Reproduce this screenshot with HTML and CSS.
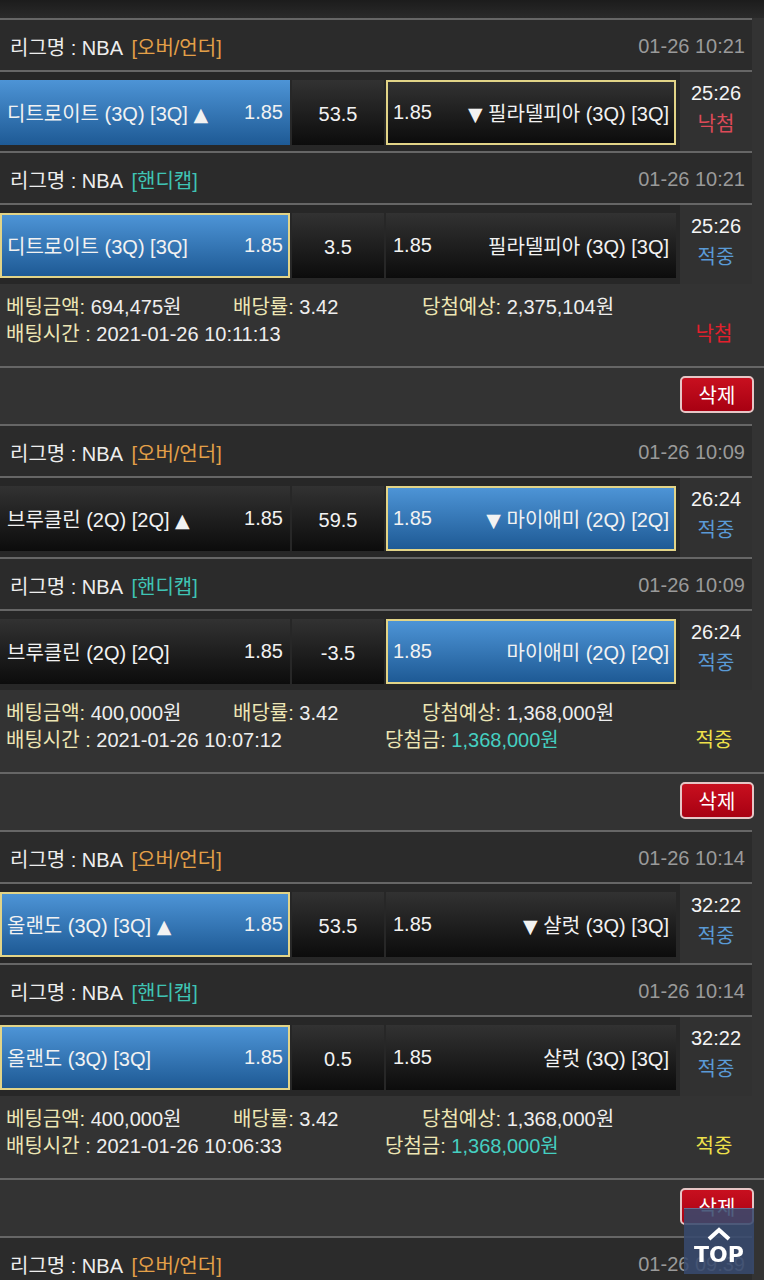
FILE: index.html
```html
<!DOCTYPE html>
<html lang="ko">
<head>
    <meta charset="UTF-8">
    <meta name="viewport" content="width=device-width, initial-scale=1.0">
    <title>배팅내역</title>
    <link rel="stylesheet" href="styles.css">
</head>
<body>
    <div class="top-bar"></div>

    <!-- slip 1 -->
    <div class="slip">
        <div class="league"><span>리그명 : NBA <em class="ou">[오버/언더]</em></span><span class="date">01-26 10:21</span></div>
        <div class="bet-row">
            <div class="cell pick"><span>디트로이트 (3Q) [3Q] <span class="arw">▲</span></span><span>1.85</span></div>
            <div class="cell draw">53.5</div>
            <div class="cell mine"><span>1.85</span><span><span class="arw">▼</span> 필라델피아 (3Q) [3Q]</span></div>
            <div class="result"><span>25:26</span><span class="lose">낙첨</span></div>
        </div>
        <div class="league"><span>리그명 : NBA <em class="hc">[핸디캡]</em></span><span class="date">01-26 10:21</span></div>
        <div class="bet-row">
            <div class="cell pick mine"><span>디트로이트 (3Q) [3Q]</span><span>1.85</span></div>
            <div class="cell draw">3.5</div>
            <div class="cell"><span>1.85</span><span>필라델피아 (3Q) [3Q]</span></div>
            <div class="result"><span>25:26</span><span class="win">적중</span></div>
        </div>
        <div class="details">
            <div class="line">
                <span class="c1"><b>베팅금액:</b> 694,475원</span>
                <span class="c2"><b>배당률:</b> 3.42</span>
                <span><b>당첨예상:</b> 2,375,104원</span>
            </div>
            <div class="line">
                <span class="c1 wide"><b>배팅시간 :</b> 2021-01-26 10:11:13</span>
                <span class="c2 grow"></span>
                <span class="status red">낙첨</span>
            </div>
        </div>
        <div class="actions"><button class="del">삭제</button></div>
    </div>

    <!-- slip 2 -->
    <div class="slip">
        <div class="league"><span>리그명 : NBA <em class="ou">[오버/언더]</em></span><span class="date">01-26 10:09</span></div>
        <div class="bet-row">
            <div class="cell"><span>브루클린 (2Q) [2Q] <span class="arw">▲</span></span><span>1.85</span></div>
            <div class="cell draw">59.5</div>
            <div class="cell pick mine"><span>1.85</span><span><span class="arw">▼</span> 마이애미 (2Q) [2Q]</span></div>
            <div class="result"><span>26:24</span><span class="win">적중</span></div>
        </div>
        <div class="league"><span>리그명 : NBA <em class="hc">[핸디캡]</em></span><span class="date">01-26 10:09</span></div>
        <div class="bet-row">
            <div class="cell"><span>브루클린 (2Q) [2Q]</span><span>1.85</span></div>
            <div class="cell draw">-3.5</div>
            <div class="cell pick mine"><span>1.85</span><span>마이애미 (2Q) [2Q]</span></div>
            <div class="result"><span>26:24</span><span class="win">적중</span></div>
        </div>
        <div class="details">
            <div class="line">
                <span class="c1"><b>베팅금액:</b> 400,000원</span>
                <span class="c2"><b>배당률:</b> 3.42</span>
                <span><b>당첨예상:</b> 1,368,000원</span>
            </div>
            <div class="line">
                <span class="c1 wide"><b>배팅시간 :</b> 2021-01-26 10:07:12</span>
                <span class="c2 grow"><b>당첨금:</b> <i>1,368,000원</i></span>
                <span class="status yellow">적중</span>
            </div>
        </div>
        <div class="actions"><button class="del">삭제</button></div>
    </div>

    <!-- slip 3 -->
    <div class="slip">
        <div class="league"><span>리그명 : NBA <em class="ou">[오버/언더]</em></span><span class="date">01-26 10:14</span></div>
        <div class="bet-row">
            <div class="cell pick mine"><span>올랜도 (3Q) [3Q] <span class="arw">▲</span></span><span>1.85</span></div>
            <div class="cell draw">53.5</div>
            <div class="cell"><span>1.85</span><span><span class="arw">▼</span> 샬럿 (3Q) [3Q]</span></div>
            <div class="result"><span>32:22</span><span class="win">적중</span></div>
        </div>
        <div class="league"><span>리그명 : NBA <em class="hc">[핸디캡]</em></span><span class="date">01-26 10:14</span></div>
        <div class="bet-row">
            <div class="cell pick mine"><span>올랜도 (3Q) [3Q]</span><span>1.85</span></div>
            <div class="cell draw">0.5</div>
            <div class="cell"><span>1.85</span><span>샬럿 (3Q) [3Q]</span></div>
            <div class="result"><span>32:22</span><span class="win">적중</span></div>
        </div>
        <div class="details">
            <div class="line">
                <span class="c1"><b>베팅금액:</b> 400,000원</span>
                <span class="c2"><b>배당률:</b> 3.42</span>
                <span><b>당첨예상:</b> 1,368,000원</span>
            </div>
            <div class="line">
                <span class="c1 wide"><b>배팅시간 :</b> 2021-01-26 10:06:33</span>
                <span class="c2 grow"><b>당첨금:</b> <i>1,368,000원</i></span>
                <span class="status yellow">적중</span>
            </div>
        </div>
        <div class="actions"><button class="del">삭제</button></div>
    </div>

    <!-- slip 4 (continues below the fold) -->
    <div class="slip">
        <div class="league"><span>리그명 : NBA <em class="ou">[오버/언더]</em></span><span class="date">01-26 09:39</span></div>
    </div>

    <a class="to-top" href="#">
        <svg width="26" height="16" viewBox="0 0 26 16"><path d="M3 13 L13 4 L23 13" fill="none" stroke="#fff" stroke-width="4"/></svg>
        <span>TOP</span>
    </a>
</body>
</html>
```

FILE: styles.css
```css
body {
    margin: 0;
    background-color: #333;
    font-family: 'Liberation Sans', 'Noto Sans CJK KR', sans-serif;
    font-size: 20px;
    color: #eee;
    overflow: hidden;
}
.top-bar {
    height: 18px;
    background: linear-gradient(#1c1c1c, #2a2a2a);
}
.league {
    display: flex;
    justify-content: space-between;
    align-items: center;
    width: 752px;
    height: 54px;
    box-sizing: border-box;
    padding: 2px 7px 0 10px;
    background-color: #2b2b2b;
    border-top: 2px solid #666;
    border-bottom: 2px solid #666;
}
.league em {
    font-style: normal;
    margin-left: 4px;
}
.league .ou {
    color: #e3a048;
}
.league .hc {
    color: #3fc4b4;
}
.league .date {
    color: #9a9a9a;
}
.bet-row {
    display: grid;
    grid-template-columns: 290px 92px 290px 1fr;
    column-gap: 2px;
    width: 752px;
    height: 79px;
    box-sizing: border-box;
    padding: 8px 0 6px;
    background-color: #272727;
}
.cell {
    display: flex;
    justify-content: space-between;
    align-items: center;
    padding: 0 7px;
    color: #f2f2f2;
    background: linear-gradient(#323232, #0c0c0c);
    white-space: nowrap;
}
.cell .arw {
    font-family: 'DejaVu Sans', sans-serif;
    font-size: 19px;
}
.cell.draw {
    justify-content: center;
    padding-top: 3px;
}
.cell.pick {
    background: linear-gradient(#4d94d6, #1e5a95);
}
.cell.mine {
    border: 2px solid #e2d487;
    padding: 0 5px;
}
.result {
    display: flex;
    flex-direction: column;
    align-items: center;
    justify-content: center;
    gap: 3px;
    margin: -8px 0 -6px 2px;
    padding-bottom: 4px;
    background-color: #313131;
    color: #f4f4f4;
}
.result .lose {
    color: #dd4a58;
}
.result .win {
    color: #5a9ad6;
}
.details {
    height: 82px;
    box-sizing: border-box;
    padding: 8px 0 0 6px;
}
.details .line {
    display: flex;
    height: 27px;
    align-items: center;
    white-space: nowrap;
}
.details b {
    font-weight: normal;
    color: #ede6b4;
}
.details i {
    font-style: normal;
    color: #45cfc0;
}
.details .c1 {
    width: 227px;
}
.details .c1.wide {
    width: 379px;
}
.details .c2 {
    width: 189px;
}
.details .c2.grow {
    width: 291px;
}
.details .status {
    width: 76px;
    text-align: center;
}
.status.red {
    color: #e3202c;
}
.status.yellow {
    color: #eee04a;
}
.actions {
    display: flex;
    justify-content: flex-end;
    height: 58px;
    box-sizing: border-box;
    padding: 8px 10px 0 0;
    border-top: 2px solid #666;
}
.del {
    height: 37px;
    width: 74px;
    font-family: inherit;
    font-size: 20px;
    color: #fff;
    background: linear-gradient(#c8101f, #a80012);
    border: 2px solid #e6c6c6;
    border-radius: 5px;
    padding: 0;
}
.to-top {
    position: fixed;
    right: 10px;
    bottom: 6px;
    width: 70px;
    height: 66px;
    display: flex;
    flex-direction: column;
    align-items: center;
    justify-content: flex-end;
    padding-bottom: 8px;
    box-sizing: border-box;
    background: rgba(56, 74, 110, 0.88);
    border-top: 1px solid rgba(140, 150, 190, 0.5);
    text-decoration: none;
    color: #fff;
    font-family: 'DejaVu Sans', sans-serif;
    font-weight: bold;
    font-size: 22px;
    line-height: 22px;
}
.to-top svg {
    margin-bottom: 2px;
}
```
